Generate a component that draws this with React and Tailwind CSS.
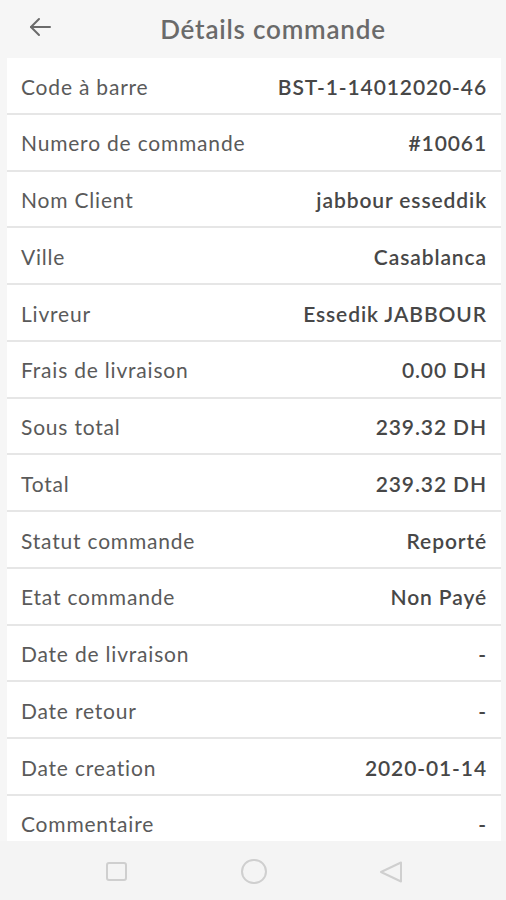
import React from "react";

const rows = [
  ["Code à barre", "BST-1-14012020-46"],
  ["Numero de commande", "#10061"],
  ["Nom Client", "jabbour esseddik"],
  ["Ville", "Casablanca"],
  ["Livreur", "Essedik JABBOUR"],
  ["Frais de livraison", "0.00 DH"],
  ["Sous total", "239.32 DH"],
  ["Total", "239.32 DH"],
  ["Statut commande", "Reporté"],
  ["Etat commande", "Non Payé"],
  ["Date de livraison", "-"],
  ["Date retour", "-"],
  ["Date creation", "2020-01-14"],
  ["Commentaire", "-"],
];

export default function App() {
  return (
    <div className="h-[900px] w-[506px] flex flex-col bg-[#f6f6f6] font-['Lato',sans-serif] overflow-hidden">
      {/* header */}
      <div className="h-[58px] flex items-center relative shrink-0">
        <svg className="absolute left-[29px] top-[17px]" width="22" height="20" viewBox="0 0 22 20" fill="none" stroke="#6b6b6b" strokeWidth="2" strokeLinecap="round" strokeLinejoin="round">
          <path d="M21 10H2" />
          <path d="M10 2L2 10l8 8" />
        </svg>
        <h1 className="w-full text-center pl-[40px] text-[26px] font-semibold text-[#6a6a6a] tracking-[0.8px]">
          Détails commande
        </h1>
      </div>

      {/* details card */}
      <div className="flex-1 overflow-hidden pl-[7px] pr-[5px]">
        <div className="bg-white">
          {rows.map(([label, value]) => (
            <div
              key={label}
              className="h-[56.75px] flex items-center justify-between pl-[14px] pr-[14px] pt-[2px] border-b-2 border-[#e6e6e6]"
            >
              <span className="text-[21px] text-[#5a5a5a] tracking-[0.8px]">{label}</span>
              <span className="text-[21px] font-semibold text-[#474747] tracking-[0.9px]">{value}</span>
            </div>
          ))}
        </div>
      </div>

      {/* android nav bar */}
      <div className="h-[59px] shrink-0 bg-[#f4f4f4] relative">
        <div className="absolute left-[106px] top-[21px] w-[21px] h-[19px] rounded-[3px] border-2 border-[#cfcfcf]" />
        <div className="absolute left-[241px] top-[18px] w-[26px] h-[25px] rounded-full border-2 border-[#cfcfcf]" />
        <svg className="absolute left-[379px] top-[19px]" width="24" height="24" viewBox="0 0 24 24" fill="none" stroke="#cfcfcf" strokeWidth="2" strokeLinejoin="round">
          <path d="M22 2.5v19L2 12z" />
        </svg>
      </div>
    </div>
  );
}
